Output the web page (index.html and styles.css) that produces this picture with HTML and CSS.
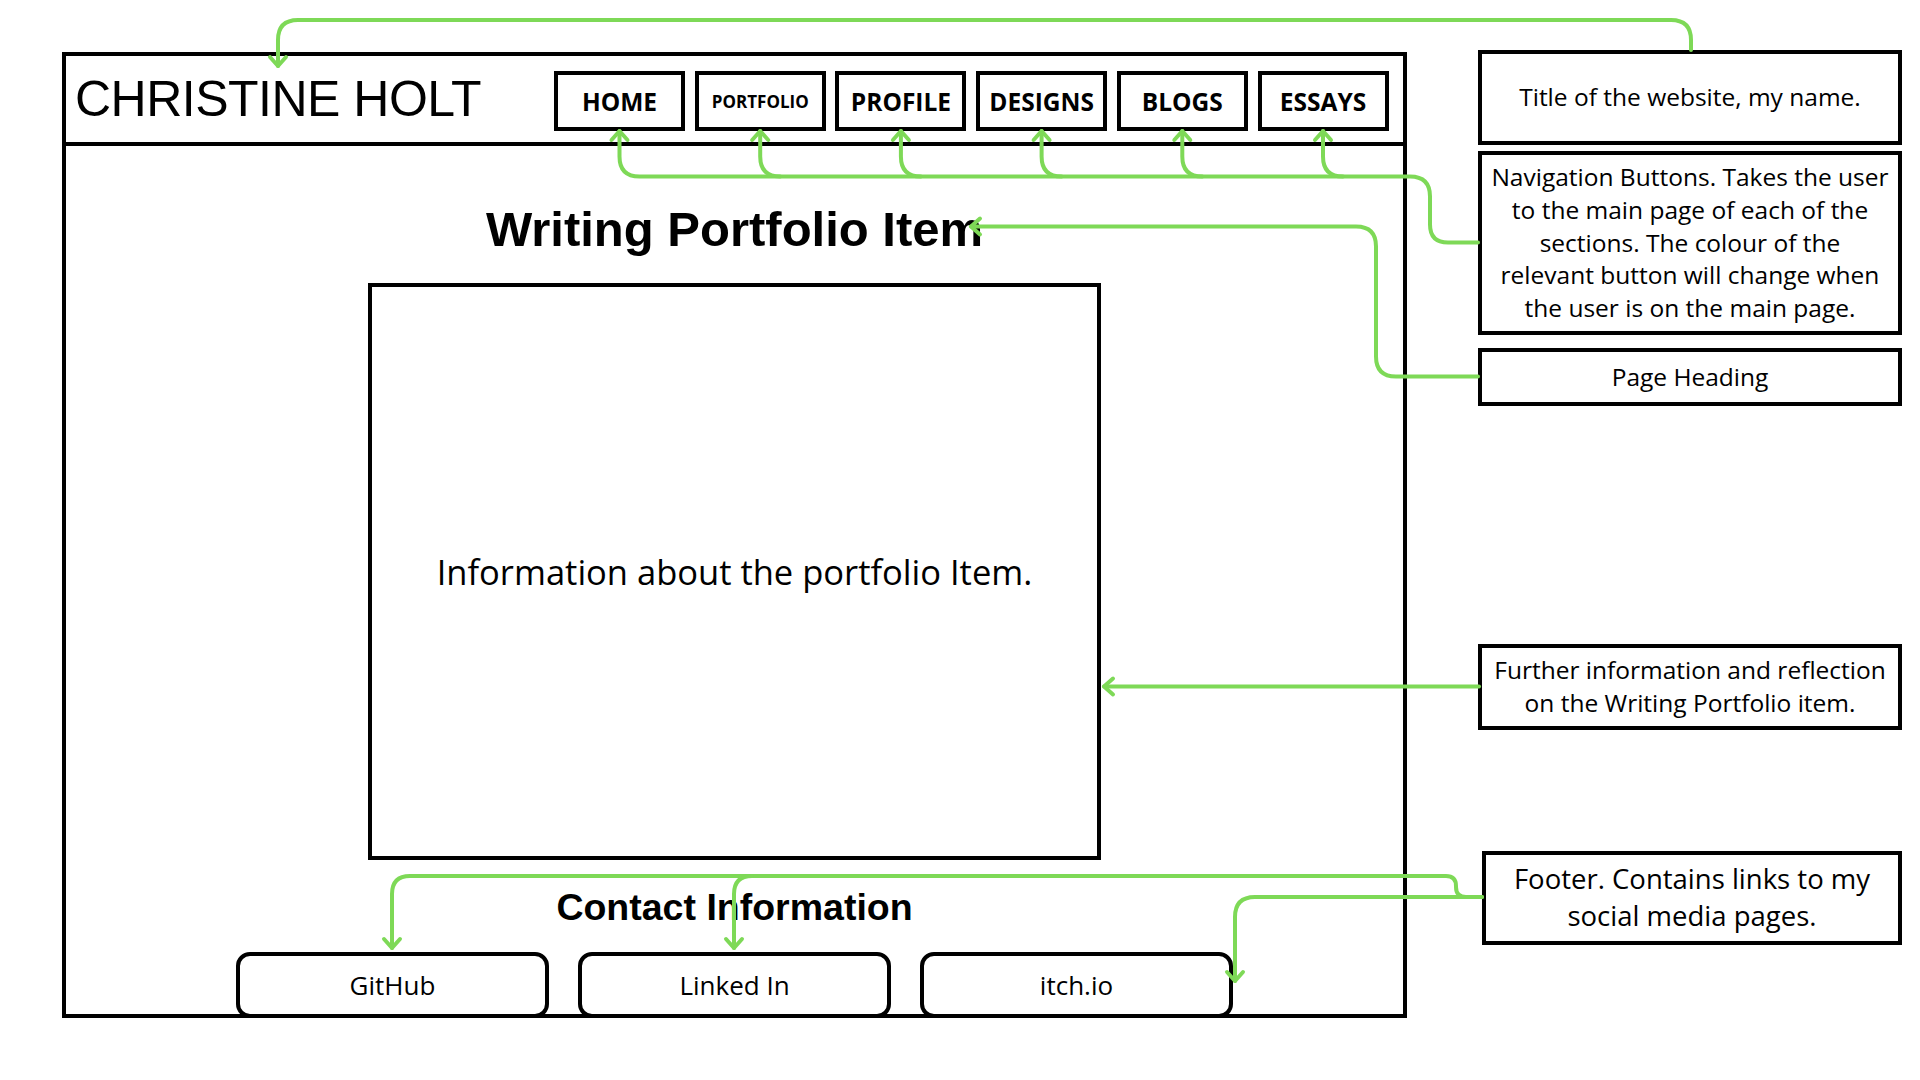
FILE: index.html
```html
<!DOCTYPE html>
<html lang="en">

<head>
    <meta charset="UTF-8">
    <meta name="viewport" content="width=device-width, initial-scale=1.0">
    <link rel="stylesheet" href="styles.css">
    <title>Writing Portfolio Item - Wireframe</title>
</head>

<body>
    <div class="board">
        <div class="site">
            <div class="site-header">
                <h1 class="site-title">CHRISTINE HOLT</h1>
                <ul class="nav">
                    <li class="nav-btn">HOME</li>
                    <li class="nav-btn nav-small">PORTFOLIO</li>
                    <li class="nav-btn">PROFILE</li>
                    <li class="nav-btn">DESIGNS</li>
                    <li class="nav-btn">BLOGS</li>
                    <li class="nav-btn">ESSAYS</li>
                </ul>
            </div>
            <div class="site-main">
                <h2 class="page-heading">Writing Portfolio Item</h2>
                <div class="item-box">Information about the portfolio Item.</div>
                <h3 class="contact-heading">Contact Information</h3>
                <div class="socials">
                    <a href="javascript:;" class="social-btn">GitHub</a>
                    <a href="javascript:;" class="social-btn">Linked In</a>
                    <a href="javascript:;" class="social-btn">itch.io</a>
                </div>
            </div>
        </div>

        <div class="notes">
            <div class="note note-title">Title of the website, my name.</div>
            <div class="note note-nav">Navigation Buttons. Takes the user<br>to the main page of each of the<br>sections. The colour of the<br>relevant button will change when<br>the user is on the main page.</div>
            <div class="note note-heading">Page Heading</div>
            <div class="note note-info">Further information and reflection<br>on the Writing Portfolio item.</div>
            <div class="note note-footer">Footer. Contains links to my<br>social media pages.</div>
        </div>

        <!-- connector arrows -->
        <svg class="links" width="1920" height="1080" viewBox="0 0 1920 1080">
            <!-- title -->
            <path d="M1691 50 V40 Q1691 20 1671 20 H298 Q278 20 278 40 V66" />
            <path d="M270 57 L278 66 L286 57" />

            <!-- nav buttons -->
            <path d="M1478 242.5 H1448 Q1430 242.5 1430 224.5 V196.5 Q1430 176.5 1410 176.5 H639.5 Q619.5 176.5 619.5 156.5 V131" />
            <path d="M760.2 131 V156.5 Q760.2 176.5 780.2 176.5" />
            <path d="M900.9 131 V156.5 Q900.9 176.5 920.9 176.5" />
            <path d="M1041.6 131 V156.5 Q1041.6 176.5 1061.6 176.5" />
            <path d="M1182.3 131 V156.5 Q1182.3 176.5 1202.3 176.5" />
            <path d="M1323 131 V156.5 Q1323 176.5 1343 176.5" />
            <path d="M611.5 140 L619.5 131 L627.5 140" />
            <path d="M752.2 140 L760.2 131 L768.2 140" />
            <path d="M892.9 140 L900.9 131 L908.9 140" />
            <path d="M1033.6 140 L1041.6 131 L1049.6 140" />
            <path d="M1174.3 140 L1182.3 131 L1190.3 140" />
            <path d="M1315 140 L1323 131 L1331 140" />

            <!-- page heading -->
            <path d="M1478 376.5 H1396 Q1376 376.5 1376 356.5 V246.5 Q1376 226.5 1356 226.5 H971" />
            <path d="M980 218.5 L971 226.5 L980 234.5" />

            <!-- further information -->
            <path d="M1479 686.5 H1104" />
            <path d="M1113 678.5 L1104 686.5 L1113 694.5" />

            <!-- footer -->
            <path d="M1482 897 H1466 Q1456 897 1456 887 V886 Q1456 876 1446 876 H410 Q392 876 392 894 V948" />
            <path d="M752 876 Q734 876 734 894 V948" />
            <path d="M384 939 L392 948 L400 939" />
            <path d="M726 939 L734 948 L742 939" />
            <path d="M1482 897 H1255 Q1235 897 1235 917 V981" />
            <path d="M1227 972 L1235 981 L1243 972" />
        </svg>
    </div>
</body>

</html>
```

FILE: styles.css
```css
* {
    box-sizing: border-box;
}

body {
    margin: 0;
    background-color: #fff;
    color: #000;
    font-family: "Open Sans", "Liberation Sans", sans-serif;
}

a {
    text-decoration: none;
    color: inherit;
}

.board {
    position: relative;
    display: flex;
    align-items: flex-start;
    gap: 71px;
    width: 1920px;
    height: 1080px;
    padding: 50px 0 0 62px;
    overflow: hidden;
}

/* wireframe of the page */
.site {
    width: 1345px;
    height: 966px;
    margin-top: 2px;
    border: 4px solid #000;
}

.site-header {
    display: flex;
    align-items: flex-start;
    height: 90px;
    padding: 0 14.5px 0 9px;
    border-bottom: 4px solid #000;
}

.site-title {
    margin: 18px 0 0;
    font-family: "Liberation Sans", sans-serif;
    font-weight: 400;
    font-size: 50px;
    line-height: 1;
    letter-spacing: -0.5px;
}

.nav {
    display: flex;
    gap: 9.7px;
    margin: 15px 0 0 auto;
    padding: 0;
    list-style: none;
}

.nav-btn {
    display: flex;
    align-items: center;
    justify-content: center;
    width: 131px;
    height: 60px;
    border: 4px solid #000;
    font-weight: 700;
    font-size: 24.5px;
    cursor: pointer;
}

.nav-small {
    font-size: 17px;
}

.site-main {
    display: flex;
    flex-direction: column;
    align-items: center;
    padding-top: 58.6px;
}

.page-heading {
    margin: 0;
    font-family: "Liberation Sans", sans-serif;
    font-weight: 700;
    font-size: 49px;
    line-height: 1;
}

.item-box {
    display: flex;
    align-items: center;
    justify-content: center;
    width: 733px;
    height: 577px;
    margin-top: 29.8px;
    border: 4px solid #000;
    font-size: 34.5px;
}

.contact-heading {
    margin: 29px 0 0;
    font-family: "Liberation Sans", sans-serif;
    font-weight: 700;
    font-size: 37.5px;
    line-height: 1;
}

.socials {
    display: flex;
    gap: 29px;
    margin-top: 25.5px;
}

.social-btn {
    display: flex;
    align-items: center;
    justify-content: center;
    width: 313px;
    height: 66px;
    border: 4px solid #000;
    border-radius: 14px;
    background-color: #fff;
    font-size: 26px;
}

/* annotations on the right */
.notes {
    display: flex;
    flex-direction: column;
    width: 424px;
}

.note {
    display: flex;
    align-items: center;
    justify-content: center;
    border: 4px solid #000;
    text-align: center;
    font-size: 24.5px;
    line-height: 32.7px;
}

.note-title {
    height: 95px;
}

.note-nav {
    height: 184px;
    margin-top: 6px;
}

.note-heading {
    height: 58px;
    margin-top: 13px;
}

.note-info {
    height: 86px;
    margin-top: 238px;
}

.note-footer {
    width: 420px;
    height: 94px;
    margin: 121px 0 0 4px;
    font-size: 27.5px;
    line-height: 36.7px;
}

.links {
    position: absolute;
    top: 0;
    left: 0;
    pointer-events: none;
}

.links path {
    fill: none;
    stroke: #7ed957;
    stroke-width: 4;
    stroke-linecap: round;
    stroke-linejoin: round;
}
```
